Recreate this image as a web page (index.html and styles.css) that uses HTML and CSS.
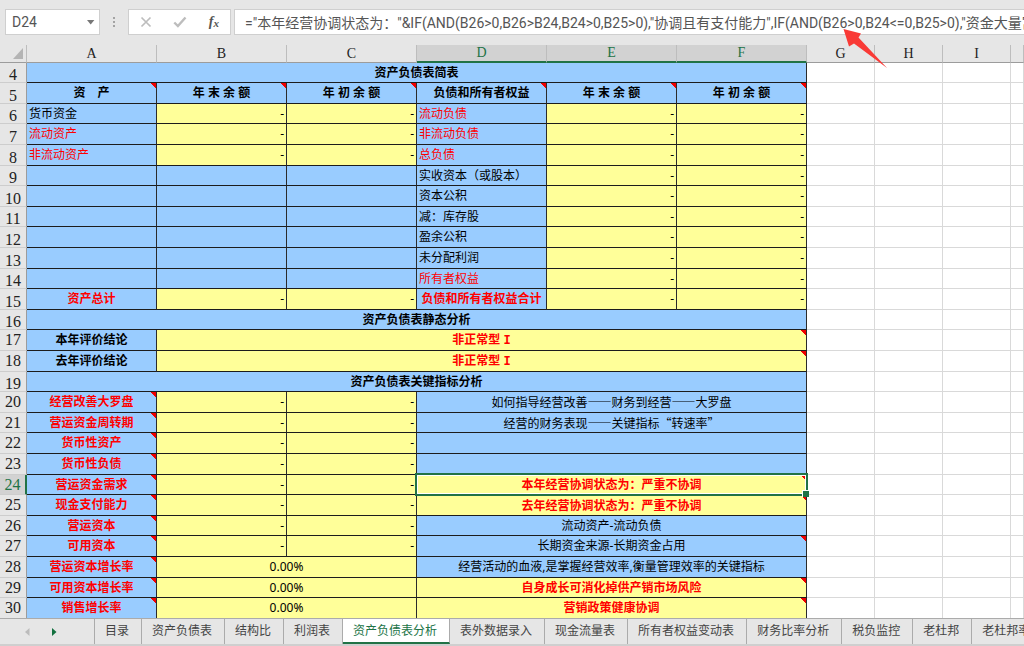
FILE: index.html
```
<!DOCTYPE html>
<html lang="zh-CN">
<head>
<meta charset="utf-8">
<title>资产负债表分析</title>
<link rel="stylesheet" href="styles.css">
</head>
<body>
<header class="bar">
  <div class="namebox">
    <input class="name-input" type="text" value="D24" aria-label="名称框">
    <button class="name-drop" type="button" aria-label="展开名称框"><svg width="8" height="5" viewBox="0 0 8 5"><path d="M0 0h7.4L3.7 4.4z" fill="#777"/></svg></button>
  </div>
  <svg class="grip" width="4" height="12" viewBox="0 0 4 12" fill="#a3a3a3" aria-hidden="true"><path d="M1 1h2v2H1zM1 5h2v2H1zM1 9h2v2H1z"/></svg>
  <div class="tools">
    <button type="button" aria-label="取消"><svg width="12" height="12" viewBox="0 0 12 12"><path d="M1.5 1.500l9 9M10.500 1.500l-9 9" stroke="#bdbdbd" stroke-width="1.700" fill="none"/></svg></button>
    <button type="button" aria-label="输入"><svg width="14" height="12" viewBox="0 0 14 12"><path d="M1.300 6.500l3.600 3.500L12.500 1.500" stroke="#bdbdbd" stroke-width="2.400" fill="none"/></svg></button>
    <button type="button" class="fx" aria-label="插入函数">f<sub>x</sub></button>
  </div>
  <input class="formula" type="text" aria-label="编辑栏" value="=&quot;本年经营协调状态为：&quot;&amp;IF(AND(B26&gt;0,B26&gt;B24,B24&gt;0,B25&gt;0),&quot;协调且有支付能力&quot;,IF(AND(B26&gt;0,B24&lt;=0,B25&gt;0),&quot;资金大量富余&quot;">
</header>
<svg class="pointer" width="46" height="44" viewBox="0 0 46 44" aria-hidden="true"><path d="M0.500 1L18 5.500L15.500 9.500L44 40L11 15.500L6 18.500z" fill="#f93a36"/></svg>
<main class="sheet">
<table class="grid">
<colgroup><col class="c-head"><col class="c-wide"><col class="c-wide"><col class="c-wide"><col class="c-wide"><col class="c-wide"><col class="c-wide"><col class="c-g"><col class="c-g"><col class="c-g"><col></colgroup>
<thead><tr><th class="corner"><svg width="10" height="11" viewBox="0 0 10 11"><path d="M10 0v11H0z" fill="#b4b4b4"/></svg></th><th>A</th><th>B</th><th>C</th><th class="on">D</th><th class="on">E</th><th class="on">F</th><th>G</th><th>H</th><th>I</th><th></th></tr></thead>
<tbody>
<tr><th class="low">4</th><td class="b s" colspan="6">资产负债表简表</td><td></td><td></td><td></td><td></td></tr>
<tr><th class="low">5</th><td class="b s n">资　产</td><td class="b s n">年 末 余 额</td><td class="b s n">年 初 余 额</td><td class="b s n">负债和所有者权益</td><td class="b s n">年 末 余 额</td><td class="b s n">年 初 余 额</td><td></td><td></td><td></td><td></td></tr>
<tr><th class="low">6</th><td class="b l">货币资金</td><td class="y v">-</td><td class="y v">-</td><td class="b l r">流动负债</td><td class="y v">-</td><td class="y v">-</td><td></td><td></td><td></td><td></td></tr>
<tr><th class="low">7</th><td class="b l r">流动资产</td><td class="y v">-</td><td class="y v">-</td><td class="b l r">非流动负债</td><td class="y v">-</td><td class="y v">-</td><td></td><td></td><td></td><td></td></tr>
<tr><th class="low">8</th><td class="b l r">非流动资产</td><td class="y v">-</td><td class="y v">-</td><td class="b l r">总负债</td><td class="y v">-</td><td class="y v">-</td><td></td><td></td><td></td><td></td></tr>
<tr><th class="low">9</th><td class="b"></td><td class="b"></td><td class="b"></td><td class="b l">实收资本<span class="mid">（</span>或股本<span class="mid">）</span></td><td class="y v">-</td><td class="y v">-</td><td></td><td></td><td></td><td></td></tr>
<tr><th class="low">10</th><td class="b"></td><td class="b"></td><td class="b"></td><td class="b l">资本公积</td><td class="y v">-</td><td class="y v">-</td><td></td><td></td><td></td><td></td></tr>
<tr><th class="low">11</th><td class="b"></td><td class="b"></td><td class="b"></td><td class="b l">减<span class="mid">：</span>库存股</td><td class="y v">-</td><td class="y v">-</td><td></td><td></td><td></td><td></td></tr>
<tr><th class="low">12</th><td class="b"></td><td class="b"></td><td class="b"></td><td class="b l">盈余公积</td><td class="y v">-</td><td class="y v">-</td><td></td><td></td><td></td><td></td></tr>
<tr><th class="low">13</th><td class="b"></td><td class="b"></td><td class="b"></td><td class="b l">未分配利润</td><td class="y v">-</td><td class="y v">-</td><td></td><td></td><td></td><td></td></tr>
<tr><th class="low">14</th><td class="b"></td><td class="b"></td><td class="b"></td><td class="b l r">所有者权益</td><td class="y v">-</td><td class="y v">-</td><td></td><td></td><td></td><td></td></tr>
<tr><th class="low">15</th><td class="b s r">资产总计</td><td class="y v">-</td><td class="y v">-</td><td class="b s r">负债和所有者权益合计</td><td class="y v">-</td><td class="y v">-</td><td></td><td></td><td></td><td></td></tr>
<tr><th class="low">16</th><td class="b s" colspan="6">资产负债表静态分析</td><td></td><td></td><td></td><td></td></tr>
<tr><th>17</th><td class="b s">本年评价结论</td><td class="y s r n" colspan="5">非正常型 <span class="roman">I</span></td><td></td><td></td><td></td><td></td></tr>
<tr><th>18</th><td class="b s">去年评价结论</td><td class="y s r n" colspan="5">非正常型 <span class="roman">I</span></td><td></td><td></td><td></td><td></td></tr>
<tr><th class="low">19</th><td class="b s" colspan="6">资产负债表关键指标分析</td><td></td><td></td><td></td><td></td></tr>
<tr><th>20</th><td class="b s r n">经营改善大罗盘</td><td class="y v">-</td><td class="y v">-</td><td class="b cjk" colspan="3">如何指导经营改善——财务到经营——大罗盘</td><td></td><td></td><td></td><td></td></tr>
<tr><th>21</th><td class="b s r n">营运资金周转期</td><td class="y v">-</td><td class="y v">-</td><td class="b cjk" colspan="3">经营的财务表现——关键指标“转速率”</td><td></td><td></td><td></td><td></td></tr>
<tr><th>22</th><td class="b s r n">货币性资产</td><td class="y v">-</td><td class="y v">-</td><td class="b" colspan="3"></td><td></td><td></td><td></td><td></td></tr>
<tr><th>23</th><td class="b s r n">货币性负债</td><td class="y v">-</td><td class="y v">-</td><td class="b" colspan="3"></td><td></td><td></td><td></td><td></td></tr>
<tr><th class="on">24</th><td class="b s r n">营运资金需求</td><td class="y v">-</td><td class="y v">-</td><td class="y s r n active" colspan="3">本年经营协调状态为<span class="mid">：</span>严重不协调</td><td></td><td></td><td></td><td></td></tr>
<tr><th>25</th><td class="b s r n">现金支付能力</td><td class="y v">-</td><td class="y v">-</td><td class="y s r n" colspan="3">去年经营协调状态为<span class="mid">：</span>严重不协调</td><td></td><td></td><td></td><td></td></tr>
<tr><th>26</th><td class="b s r n">营运资本</td><td class="y v">-</td><td class="y v">-</td><td class="b" colspan="3">流动资产-流动负债</td><td></td><td></td><td></td><td></td></tr>
<tr><th>27</th><td class="b s r n">可用资本</td><td class="y v">-</td><td class="y v">-</td><td class="b n" colspan="3">长期资金来源-长期资金占用</td><td></td><td></td><td></td><td></td></tr>
<tr><th>28</th><td class="b s r n">营运资本增长率</td><td class="y" colspan="2">0.00%</td><td class="b" colspan="3">经营活动的血液,是掌握经营效率,衡量管理效率的关键指标</td><td></td><td></td><td></td><td></td></tr>
<tr><th>29</th><td class="b s r n">可用资本增长率</td><td class="y" colspan="2">0.00%</td><td class="y s r n" colspan="3">自身成长可消化掉供产销市场风险</td><td></td><td></td><td></td><td></td></tr>
<tr><th>30</th><td class="b s r n">销售增长率</td><td class="y" colspan="2">0.00%</td><td class="y s r n" colspan="3">营销政策健康协调</td><td></td><td></td><td></td><td></td></tr>
</tbody>
</table>
</main>
<nav class="tabs" aria-label="工作表">
  <div class="scroll">
    <button type="button" aria-label="上一个"><svg width="5" height="8" viewBox="0 0 5 8"><path d="M4.500 0v8L0 4z" fill="#bcbcbc"/></svg></button>
    <button type="button" aria-label="下一个"><svg width="5" height="8" viewBox="0 0 5 8"><path d="M0 0v8l4.500-4z" fill="#12703f"/></svg></button>
  </div>
  <button class="tab" type="button">目录</button>
  <button class="tab" type="button">资产负债表</button>
  <button class="tab" type="button">结构比</button>
  <button class="tab" type="button">利润表</button>
  <button class="tab current" type="button">资产负债表分析</button>
  <button class="tab" type="button">表外数据录入</button>
  <button class="tab" type="button">现金流量表</button>
  <button class="tab" type="button">所有者权益变动表</button>
  <button class="tab" type="button">财务比率分析</button>
  <button class="tab" type="button">税负监控</button>
  <button class="tab" type="button">老杜邦</button>
  <button class="tab" type="button">老杜邦率</button>
</nav>
</body>
</html>
```
FILE: styles.css
```
* { box-sizing: border-box; }

body {
  margin: 0;
  height: 100vh;
  display: flex;
  flex-direction: column;
  overflow: hidden;
  position: relative;
  background: #e6e6e6;
  font-family: "Noto Sans", "Noto Sans CJK SC", sans-serif;
  font-size: 12px;
  color: #000;
}

button, input {
  font: inherit;
  color: inherit;
  background: none;
  border: 0;
  padding: 0;
  margin: 0;
}

svg { display: block; }

/* Formula bar */
.bar {
  flex: none;
  display: flex;
  align-items: center;
  padding: 9px 0 10px 5px;
  color: #555;
  font-size: 14px;
}

.namebox, .tools, .formula {
  height: 26px;
  background: #fff;
  border: 1px solid #cfcfcf;
}

.namebox {
  width: 95px;
  display: flex;
  align-items: center;
  padding: 0 4px 0 6px;
}

.name-input {
  flex: 1;
  min-width: 0;
  font-family: Roboto, sans-serif;
}

.grip { margin: 0 12px; }

.tools {
  width: 103px;
  display: flex;
  align-items: center;
  justify-content: space-between;
  padding: 0 11px;
}

.fx {
  font-family: "Liberation Serif", serif;
  font-style: italic;
  font-weight: bold;
  font-size: 14px;
  line-height: 16px;
}

.fx sub { font-size: 11px; line-height: 0; vertical-align: -1px; }

.formula {
  flex: 1;
  min-width: 0;
  margin-left: 3px;
  padding-left: 10px;
  border-right: 0;
  font-family: Roboto, "Noto Sans CJK SC", sans-serif;
}

.pointer {
  position: absolute;
  left: 843px;
  top: 28px;
  z-index: 3;
}

/* Grid */
.sheet {
  flex: 1;
  min-height: 0;
  overflow: hidden;
  background: #fff;
}

.grid {
  width: 100%;
  table-layout: fixed;
  border-collapse: separate;
  border-spacing: 0;
}

.c-head { width: 27px; }
.c-wide { width: 130px; }
.c-g { width: 68px; }

.grid th {
  padding: 0;
  font-family: "Liberation Serif", serif;
  font-weight: normal;
  font-size: 16px;
  line-height: 16px;
  color: #222;
  background: #e6e6e6;
}

.grid thead th {
  height: 18px;
  font-size: 14px;
  border-right: 1px solid #bdbdbd;
  border-bottom: 1px solid #9c9c9c;
}

.grid thead .on {
  color: #217346;
  background: #d2d2d2;
  border-bottom: 2px solid #217346;
}

.corner svg { margin-left: 13px; }

tbody th {
  border-right: 1px solid #9c9c9c;
  border-bottom: 1px solid #cdcdcd;
  vertical-align: middle;
}

.grid tbody .low { vertical-align: bottom; line-height: 14px; }

.grid tbody .on {
  color: #217346;
  background: #d2d2d2;
  border-right: 2px solid #217346;
}

tbody tr { height: 21px; }
tbody tr:nth-child(5n+1), tbody tr:nth-child(5n+3) { height: 20px; }

.grid td {
  padding: 0 2px;
  line-height: 16px;
  text-align: center;
  white-space: nowrap;
  border-right: 1px solid #d9d9d9;
  border-bottom: 1px solid #d9d9d9;
}

.grid .b, .grid .y {
  border-right-color: #2b2b2b;
  border-bottom-color: #1c1c1c;
}

.b { background-color: #99ccff; }
.y { background-color: #ffff99; }
.s { font-weight: bold; }
.r { color: #ff0000; }
.grid .l { text-align: left; }
.grid .v { text-align: right; }
.n { background-image: linear-gradient(225deg, #f00000 4px, transparent 4px); }
.roman { font-family: "Liberation Mono", monospace; }
.cjk { font-family: "Noto Sans CJK SC", sans-serif; }
.mid { font-family: "Noto Sans CJK TC", sans-serif; }

.active { position: relative; }

.active::before {
  content: "";
  position: absolute;
  inset: -2px;
  border: 2px solid #217346;
  outline: 1px solid #fff;
  outline-offset: -3px;
}

.active::after {
  content: "";
  position: absolute;
  right: -3px;
  bottom: -3px;
  width: 6px;
  height: 6px;
  background: #217346;
  border: 1px solid #fff;
  border-width: 1px 0 0 1px;
}

/* Sheet tabs */
.tabs {
  flex: none;
  height: 28px;
  display: flex;
  overflow: hidden;
  border-top: 1px solid #ababab;
  border-bottom: 2px solid #cfcfcf;
  color: #444;
}

.scroll {
  flex: none;
  width: 95px;
  display: flex;
  align-items: center;
  gap: 22px;
  padding-left: 25px;
  border-right: 1px solid #ababab;
}

.tab {
  flex: none;
  padding: 0 12px 4px 10px;
  border-right: 1px solid #ababab;
  white-space: nowrap;
}

.current {
  padding-bottom: 2px;
  color: #217346;
  background: #fff;
  border-bottom: 2px solid #217346;
}
```
